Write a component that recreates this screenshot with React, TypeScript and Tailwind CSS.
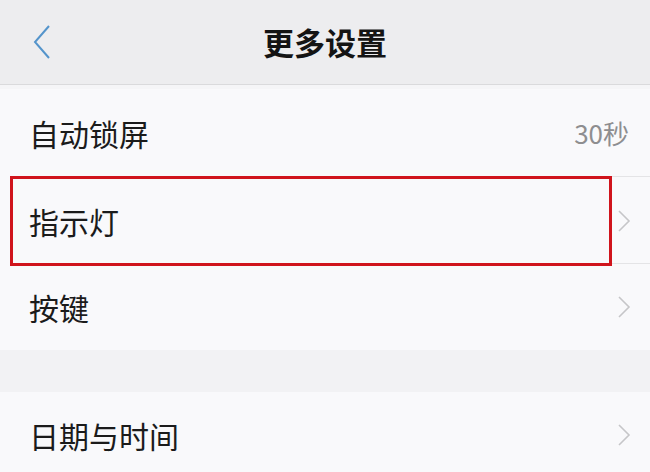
import React from 'react';

const font = { fontFamily: '"Noto Sans CJK SC", "Noto Sans", sans-serif' };

const Chevron: React.FC = () => (
  <svg width="14" height="24" viewBox="0 0 14 24" fill="none">
    <path d="M2 2 L12 12 L2 22" stroke="#c6c6c8" strokeWidth="1.6" />
  </svg>
);

type RowProps = {
  label: string;
  value?: string;
  divider?: boolean;
  highlight?: boolean;
  height: string;
};

const Row: React.FC<RowProps> = ({ label, value, divider, highlight, height }) => (
  <div className={`relative flex items-center justify-between pl-[29px] pr-[19px] ${height}`}>
    <span className="text-[30px] leading-none text-[#1b1b1b]">{label}</span>
    {value ? (
      <span className="text-[26px] leading-none text-[#8e8e90] pr-[2px]">{value}</span>
    ) : (
      <Chevron />
    )}
    {divider && <div className="absolute bottom-0 left-[28px] right-0 h-px bg-[#e4e4e6]" />}
    {highlight && (
      <div className="absolute left-[10px] w-[602px] top-[-1px] bottom-[-2px] border-[3px] border-[#d0141c]" />
    )}
  </div>
);

const App: React.FC = () => {
  return (
    <div className="w-[650px] h-[472px] overflow-hidden bg-[#f9f9fb]" style={font}>
      <div className="h-[85px] grid grid-cols-[1fr_auto_1fr] items-center bg-[#ededef] border-b border-[#dadadc]">
        <div className="pl-[32px] flex items-center">
          <svg width="20" height="36" viewBox="0 0 20 36" fill="none">
            <path d="M17 2 L3 18 L17 34" stroke="#5494cb" strokeWidth="2" />
          </svg>
        </div>
        <div className="text-[31px] font-bold text-[#141414] leading-none pb-[2px]">更多设置</div>
        <div />
      </div>
      <div className="h-[4px] bg-[#f5f5f7]" />
      <Row label="自动锁屏" value="30秒" divider height="h-[88px]" />
      <Row label="指示灯" divider highlight height="h-[87px]" />
      <Row label="按键" height="h-[86px]" />
      <div className="h-[42px] bg-[#f2f2f4]" />
      <Row label="日期与时间" height="h-[86px]" />
    </div>
  );
};

export default App;
